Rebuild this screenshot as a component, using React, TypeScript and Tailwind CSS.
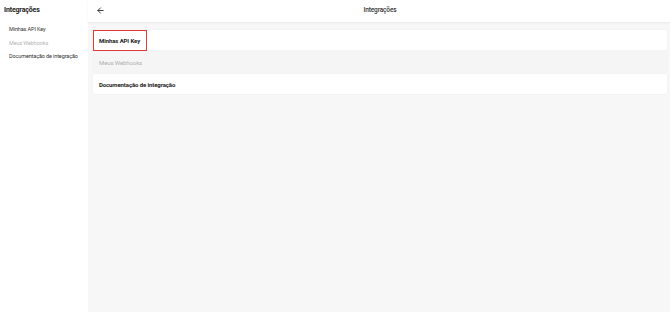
import React from "react"
import { ArrowLeft } from "lucide-react"

export default function App() {
  return (
    <div className="flex h-[312px] w-[670px] overflow-hidden font-['Roboto',sans-serif] text-[#222]">
      {/* sidebar */}
      <aside className="w-[88px] shrink-0 bg-white">
        <h1 className="pl-[4px] pt-[5px] text-[7px] font-bold leading-[10px] tracking-[-0.15px] text-[#222]">Integrações</h1>
        <nav className="mt-[11px] flex flex-col gap-[6.5px] pl-[9px] text-[5.5px] leading-[7px] tracking-[-0.12px]">
          <span className="text-[#333]">Minhas API Key</span>
          <span className="text-[#b5b5b5]">Meus Webhooks</span>
          <span className="text-[#333]">Documentação de integração</span>
        </nav>
      </aside>

      {/* main */}
      <main className="flex flex-1 flex-col bg-[#f7f7f7]">
        <header className="relative flex h-[22px] items-center justify-center bg-white shadow-[0_1px_2px_rgba(0,0,0,0.06)]">
          <ArrowLeft className="absolute left-[8px] top-[6px] h-[9px] w-[9px] text-[#333]" strokeWidth={2.5} />
          <span className="pl-[2px] text-[6.5px] font-medium tracking-[-0.12px] text-[#333]">Integrações</span>
        </header>
        <div className="flex flex-col gap-[2px] pl-[5px] pr-[3px] pt-[8px]">
          <div className="flex h-[20px] items-center rounded-[2px] bg-white shadow-[0_0_2px_rgba(0,0,0,0.06)]">
            <div className="flex h-[21px] items-center border border-[#e53935] pl-[5px] pr-[6px]">
              <span className="text-[6px] font-bold tracking-[-0.1px] text-[#222]">Minhas API Key</span>
            </div>
          </div>
          <div className="flex h-[20px] items-center rounded-[2px] bg-[#f5f5f5] pl-[6px] shadow-[0_0_2px_rgba(0,0,0,0.05)]">
            <span className="text-[6px] tracking-[-0.1px] text-[#b0b0b0]">Meus Webhooks</span>
          </div>
          <div className="flex h-[20px] items-center rounded-[2px] bg-white pl-[6px] shadow-[0_0_2px_rgba(0,0,0,0.06)]">
            <span className="text-[6px] font-bold tracking-[-0.1px] text-[#222]">Documentação de integração</span>
          </div>
        </div>
      </main>
    </div>
  )
}
